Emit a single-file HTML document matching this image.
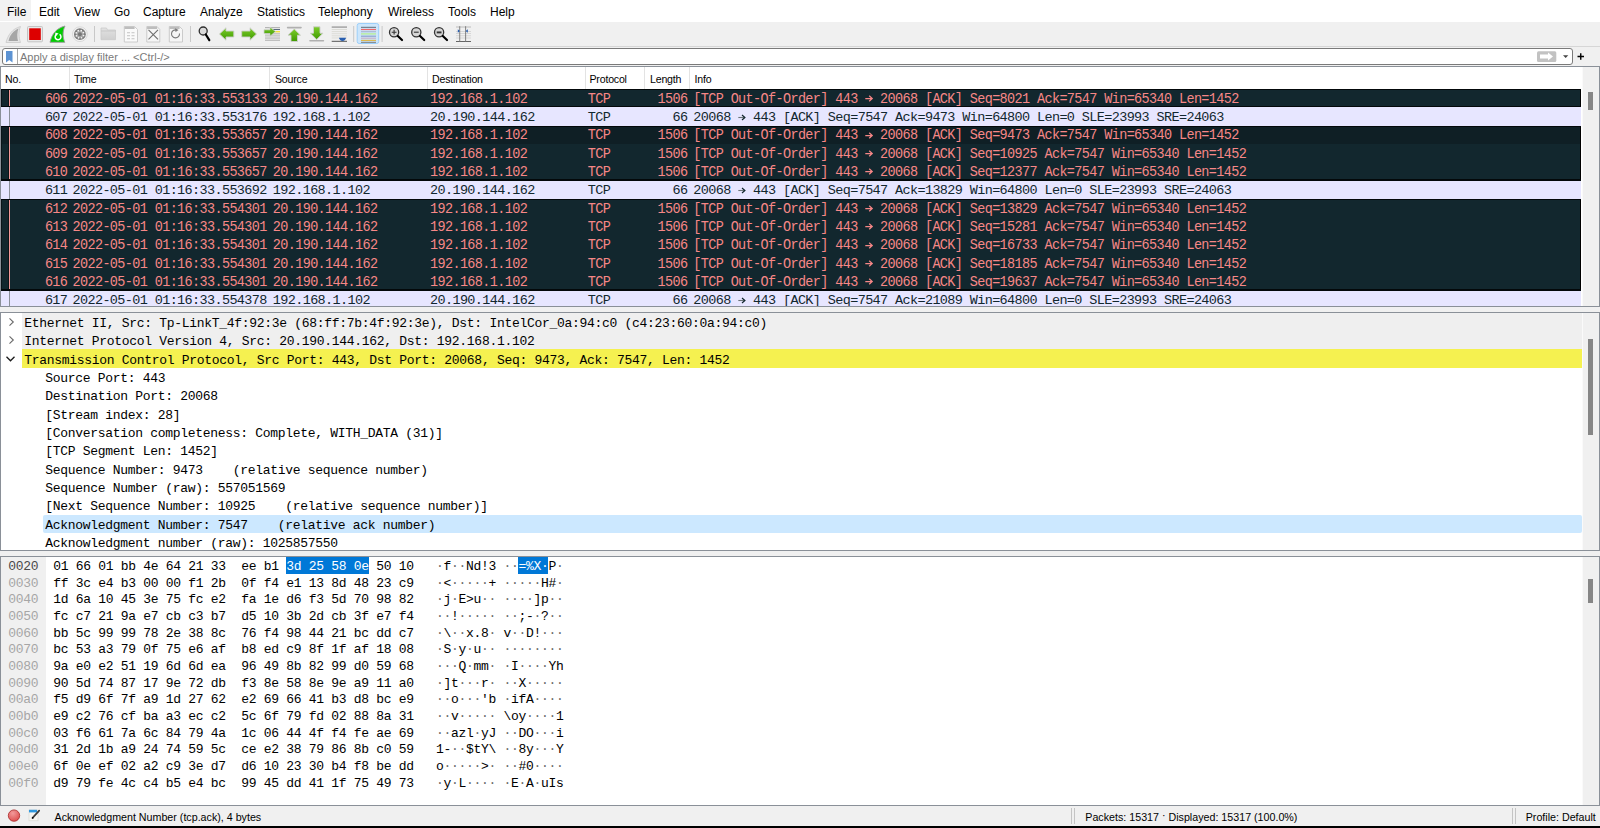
<!DOCTYPE html><html><head><meta charset="utf-8"><style>
*{margin:0;padding:0;box-sizing:border-box}
html,body{width:1600px;height:828px;overflow:hidden;background:#f0f0f0;position:relative;font-family:"Liberation Sans", sans-serif}
.a{position:absolute}
.t{position:absolute;white-space:pre;line-height:normal}
.m{font-family:"Liberation Mono", monospace;font-size:13px;letter-spacing:-0.3px}
.p{font-family:"Liberation Mono", monospace;font-size:13.5px;letter-spacing:-0.63px}
.pd{transform:scaleY(1.1);transform-origin:0 11.25px}
.s{font-family:"Liberation Sans", sans-serif}
.c{position:absolute;overflow:hidden}
</style></head><body><div class="a" style="left:0;top:0;width:1600px;height:22px;background:#fff"></div>
<div class="a" style="left:0;top:0;width:31px;height:20.5px;background:#f2f2f2;border-radius:0 0 2px 0"></div>
<div class="t s" style="left:7px;top:4.6px;font-size:12px;color:#000">File</div>
<div class="t s" style="left:39px;top:4.6px;font-size:12px;color:#000">Edit</div>
<div class="t s" style="left:74px;top:4.6px;font-size:12px;color:#000">View</div>
<div class="t s" style="left:114px;top:4.6px;font-size:12px;color:#000">Go</div>
<div class="t s" style="left:143px;top:4.6px;font-size:12px;color:#000">Capture</div>
<div class="t s" style="left:200px;top:4.6px;font-size:12px;color:#000">Analyze</div>
<div class="t s" style="left:257px;top:4.6px;font-size:12px;color:#000">Statistics</div>
<div class="t s" style="left:318px;top:4.6px;font-size:12px;color:#000">Telephony</div>
<div class="t s" style="left:388px;top:4.6px;font-size:12px;color:#000">Wireless</div>
<div class="t s" style="left:448px;top:4.6px;font-size:12px;color:#000">Tools</div>
<div class="t s" style="left:490px;top:4.6px;font-size:12px;color:#000">Help</div>
<div class="a" style="left:0;top:22px;width:1600px;height:24px;background:#f0f0f0"></div>
<div class="a" style="left:0;top:46px;width:1600px;height:1px;background:#d6d6d6"></div>
<svg class="a" style="left:0;top:0" width="480" height="48" viewBox="0 0 480 48">
<defs>
<linearGradient id="gfold" x1="0" y1="0" x2="0" y2="1"><stop offset="0" stop-color="#e2e2e2"/><stop offset="1" stop-color="#cfcfcf"/></linearGradient>
<linearGradient id="gar" x1="0" y1="0" x2="0" y2="1"><stop offset="0" stop-color="#7ccc2a"/><stop offset="1" stop-color="#3f9a00"/></linearGradient>
</defs>
<!-- 1 grey fin -->
<path d="M6 42.5 C8 35 12 29 20.5 26.5 C18.5 31 18.5 37 20.5 42.5 Z" fill="#e6e6e6" stroke="#d0d0d0" stroke-width="1"/>
<path d="M8.5 41 C10 35 13 31 18.5 28.5 C17 32.5 17 37 18 41 Z" fill="#a6a6a6"/>
<!-- 2 stop -->
<rect x="27.5" y="26.5" width="15" height="15.3" rx="1" fill="#e8e8e8" stroke="#c4c4c4" stroke-width="1"/>
<rect x="29.2" y="28.3" width="11.6" height="11.7" fill="#dd0000"/>
<!-- 3 green fin -->
<path d="M50 42.3 C52 34 56 28.5 65 26 C62.5 31 62.5 37 64.8 42.3 Z" fill="#00cc00" stroke="#9a9a9a" stroke-width="0.9"/>
<path d="M56.2 34.6 A2.9 2.9 0 1 0 59.6 34.4" fill="none" stroke="#ffffff" stroke-width="1.5"/>
<path d="M55.2 32.4 L58.6 33.6 L55.6 36.2 Z" fill="#fff"/>
<!-- 4 gear -->
<circle cx="79.9" cy="34.2" r="7.4" fill="#f3f3f3" stroke="#d6d6d6" stroke-width="0.9"/>
<circle cx="79.9" cy="34.2" r="5.9" fill="#7e7e7e"/>
<circle cx="79.9" cy="34.2" r="3.6" fill="#a9a9a9"/>
<circle cx="83.56" cy="35.53" r="0.85" fill="#f6f6f6"/><circle cx="81.55" cy="37.73" r="0.85" fill="#f6f6f6"/><circle cx="78.57" cy="37.86" r="0.85" fill="#f6f6f6"/><circle cx="76.37" cy="35.85" r="0.85" fill="#f6f6f6"/><circle cx="76.24" cy="32.87" r="0.85" fill="#f6f6f6"/><circle cx="78.25" cy="30.67" r="0.85" fill="#f6f6f6"/><circle cx="81.23" cy="30.54" r="0.85" fill="#f6f6f6"/><circle cx="83.43" cy="32.55" r="0.85" fill="#f6f6f6"/>
<circle cx="79.9" cy="34.2" r="2" fill="#777"/>
<!-- sep -->
<rect x="94" y="26" width="1" height="16" fill="#c8c8c8"/>
<!-- 6 folder -->
<path d="M101 29 L101 28 L106.5 28 L107.5 30 L115.5 30 L115.5 39.7 L101 39.7 Z" fill="url(#gfold)" stroke="#cacaca" stroke-width="0.8"/>
<rect x="101" y="30.6" width="14.5" height="0.8" fill="#c2c2c2"/>
<!-- 7 doc grid -->
<path d="M124.3 26.5 L134.5 26.5 L137.5 29.5 L137.5 42 L124.3 42 Z" fill="#fafafa" stroke="#c6c6c6" stroke-width="0.9"/>
<rect x="124.6" y="26.8" width="10" height="2.2" fill="#bdbdbd"/>
<g fill="#d0d0d0"><rect x="127" y="32" width="3" height="1.3"/><rect x="131.5" y="32" width="3" height="1.3"/><rect x="127" y="35" width="3" height="1.3"/><rect x="131.5" y="35" width="3" height="1.3"/><rect x="127" y="38" width="3" height="1.3"/><rect x="131.5" y="38" width="3" height="1.3"/></g>
<!-- 8 doc X -->
<path d="M146.8 26.5 L157 26.5 L159.8 29.5 L159.8 42 L146.8 42 Z" fill="#f6f6f6" stroke="#c6c6c6" stroke-width="0.9"/>
<rect x="147.1" y="26.8" width="10" height="2.2" fill="#bdbdbd"/>
<path d="M148.5 29.8 L158 39.3 M158 29.8 L148.5 39.3" stroke="#6e6e6e" stroke-width="1.1"/>
<!-- 9 doc reload -->
<path d="M169.3 26.5 L179.5 26.5 L182.5 29.5 L182.5 42 L169.3 42 Z" fill="#f6f6f6" stroke="#c6c6c6" stroke-width="0.9"/>
<rect x="169.6" y="26.8" width="10" height="2.2" fill="#bdbdbd"/>
<path d="M179.5 33.5 A4 4 0 1 1 176.5 30" fill="none" stroke="#7a7a7a" stroke-width="1.1"/>
<path d="M175 28.3 L178.6 30 L175.5 32 Z" fill="#7a7a7a"/>
<!-- sep -->
<rect x="190" y="26" width="1" height="16" fill="#c8c8c8"/>
<!-- 11 find -->
<circle cx="203.2" cy="31" r="4" fill="#dadada" stroke="#2e2e2e" stroke-width="1.3"/>
<path d="M205.8 34.5 L209.3 40.2" stroke="#000" stroke-width="2.2" stroke-linecap="round"/>
<!-- 12 back -->
<path d="M219.5 34 L226 27.8 L226 31 L233.8 31 L233.8 37 L226 37 L226 40.2 Z" fill="url(#gar)" stroke="#cfcfcf" stroke-width="0.9"/>
<!-- 13 forward -->
<path d="M256.5 34 L250 27.8 L250 31 L241.7 31 L241.7 37 L250 37 L250 40.2 Z" fill="url(#gar)" stroke="#cfcfcf" stroke-width="0.9"/>
<!-- 14 goto -->
<g fill="#b4b4b4"><rect x="265" y="27" width="15" height="1.2"/><rect x="265" y="33.3" width="15" height="1.1"/><rect x="265" y="35.4" width="15" height="1"/><rect x="265" y="37.5" width="15" height="1.1"/><rect x="265" y="39.7" width="15" height="1.1"/></g>
<rect x="273" y="29" width="7" height="1" fill="#5a6a80"/>
<rect x="275" y="31" width="5" height="1.4" fill="#f0e040"/>
<path d="M264 29.8 L270 29.8 L270 27 L275.5 31.6 L270 36.2 L270 33.5 L264 33.5 Z" fill="url(#gar)" stroke="#cfcfcf" stroke-width="0.8"/>
<!-- 15 first -->
<rect x="286.8" y="26.8" width="15" height="1.6" rx="0.8" fill="#b0b0b0"/>
<path d="M294.3 29 L300.5 35.2 L297.5 35.2 L297.5 41.5 L291 41.5 L291 35.2 L288 35.2 Z" fill="url(#gar)" stroke="#cfcfcf" stroke-width="0.9"/>
<!-- 16 last -->
<path d="M316.7 39.5 L323 33.2 L320 33.2 L320 26.8 L313.5 26.8 L313.5 33.2 L310.4 33.2 Z" fill="url(#gar)" stroke="#cfcfcf" stroke-width="0.9"/>
<rect x="309.2" y="40" width="15" height="1.6" rx="0.8" fill="#b0b0b0"/>
<!-- 17 autoscroll -->
<rect x="331.7" y="26.3" width="15.3" height="1.6" fill="#a8a8a8"/>
<g fill="#dadad4"><rect x="331.7" y="29.1" width="15.3" height="0.9"/><rect x="331.7" y="31.2" width="15.3" height="0.9"/><rect x="331.7" y="33.3" width="15.3" height="0.9"/><rect x="331.7" y="35.4" width="15.3" height="0.9"/><rect x="331.7" y="37.5" width="15.3" height="0.9"/></g>
<rect x="331.7" y="40.8" width="15.3" height="1" fill="#555"/>
<path d="M339 37.8 L346 37.8 Q345.5 40.8 342.5 41 Q339.5 40.8 339 37.8 Z" fill="#2a5fb0"/>
<!-- sep -->
<rect x="353.2" y="26" width="1" height="16" fill="#c8c8c8"/>
<!-- 19 colorize pressed -->
<rect x="357.2" y="23.5" width="21.5" height="20" rx="2" fill="#cde6fb" stroke="#9ccffa" stroke-width="1"/>
<g>
<rect x="361" y="26.8" width="15" height="1.1" fill="#6b7b88"/>
<rect x="361" y="28.9" width="15" height="1.2" fill="#f06868"/>
<rect x="361" y="31.1" width="15" height="1.2" fill="#a8b8d4"/>
<rect x="361" y="33.2" width="15" height="1.4" fill="#b8ee98"/>
<rect x="361" y="35.6" width="15" height="1.2" fill="#90a4cc"/>
<rect x="361" y="37.6" width="15" height="1.2" fill="#c8b4c8"/>
<rect x="361" y="39.8" width="15" height="1.2" fill="#dcb850"/>
<rect x="361" y="41.8" width="15" height="1" fill="#7a7a7a"/>
</g>
<!-- sep -->
<rect x="381.6" y="26" width="1" height="16" fill="#c8c8c8"/>
<!-- 21 zoom in -->
<circle cx="394.1" cy="32.2" r="4.6" fill="#d6d6d6" stroke="#333" stroke-width="1.3"/>
<path d="M391.7 32.2 L396.5 32.2 M394.1 29.8 L394.1 34.6" stroke="#333" stroke-width="1.1"/>
<path d="M397.8 36 L402 40" stroke="#000" stroke-width="2.2" stroke-linecap="round"/>
<!-- 22 zoom out -->
<circle cx="416.3" cy="32.2" r="4.6" fill="#d6d6d6" stroke="#333" stroke-width="1.3"/>
<path d="M413.9 32.2 L418.7 32.2" stroke="#333" stroke-width="1.1"/>
<path d="M420 36 L424.2 40" stroke="#000" stroke-width="2.2" stroke-linecap="round"/>
<!-- 23 zoom 100 -->
<circle cx="439.1" cy="32.2" r="4.6" fill="#d6d6d6" stroke="#333" stroke-width="1.3"/>
<path d="M436.7 32.4 L441.5 32.4" stroke="#333" stroke-width="1.9"/>
<path d="M442.8 36 L447 40" stroke="#000" stroke-width="2.2" stroke-linecap="round"/>
<!-- 24 resize columns -->
<g fill="#d0d0d0"><rect x="456" y="26.2" width="15" height="1.6"/><rect x="456" y="31" width="15" height="0.8"/><rect x="456" y="33.2" width="15" height="0.8"/><rect x="456" y="35.4" width="15" height="0.8"/><rect x="456" y="37.6" width="15" height="0.8"/></g>
<rect x="456" y="41" width="15" height="0.9" fill="#555"/>
<rect x="459.3" y="26.2" width="0.9" height="15.6" fill="#777"/>
<rect x="465.2" y="26.2" width="0.9" height="15.6" fill="#777"/>
<path d="M457.8 29.2 L460 31 L457.8 32.8 Z" fill="#2a5fb0"/>
<path d="M467.8 29.2 L465.6 31 L467.8 32.8 Z" fill="#2a5fb0"/>
</svg>
<div class="a" style="left:2px;top:48px;width:1571px;height:17px;background:#fff;border:1px solid #7a7a7a;border-radius:3px"></div>
<svg class="a" style="left:5px;top:50px" width="9" height="14" viewBox="0 0 9 14"><path d="M1 1 L7.5 1 L7.5 12.5 L4.25 10 L1 12.5 Z" fill="#5d93d3"/></svg>
<div class="a" style="left:17px;top:49px;width:1px;height:15px;background:#a8a8a8"></div>
<div class="t s" style="left:20px;top:50.5px;font-size:11px;color:#7a7a7a">Apply a display filter ... &lt;Ctrl-/&gt;</div>
<svg class="a" style="left:1536px;top:50px" width="50" height="14" viewBox="0 0 50 14"><rect x="1" y="1.2" width="19.3" height="10.8" rx="1.5" fill="#c2c2c2"/><path d="M4 4.6 L12 4.6 L12 2.6 L17 6.6 L12 10.6 L12 8.6 L4 8.6 Z" fill="#fff"/><path d="M27 5.3 L32.3 5.3 L29.65 8 Z" fill="#444"/><path d="M44.75 3.3 L44.75 9.8 M41.5 6.5 L48 6.5" stroke="#000" stroke-width="1.4"/></svg>
<div class="a" style="left:0;top:66px;width:1600px;height:241px;background:#fff;border:1px solid #8a9098"></div>
<div class="a" style="left:69px;top:67px;width:1px;height:22px;background:#e3e3e3"></div>
<div class="a" style="left:269px;top:67px;width:1px;height:22px;background:#e3e3e3"></div>
<div class="a" style="left:427px;top:67px;width:1px;height:22px;background:#e3e3e3"></div>
<div class="a" style="left:585px;top:67px;width:1px;height:22px;background:#e3e3e3"></div>
<div class="a" style="left:644px;top:67px;width:1px;height:22px;background:#e3e3e3"></div>
<div class="a" style="left:689px;top:67px;width:1px;height:22px;background:#e3e3e3"></div>
<div class="t s" style="left:5px;top:73px;font-size:10.6px;letter-spacing:-0.2px;color:#000">No.</div>
<div class="t s" style="left:74px;top:73px;font-size:10.6px;letter-spacing:-0.2px;color:#000">Time</div>
<div class="t s" style="left:275px;top:73px;font-size:10.6px;letter-spacing:-0.2px;color:#000">Source</div>
<div class="t s" style="left:432px;top:73px;font-size:10.6px;letter-spacing:-0.2px;color:#000">Destination</div>
<div class="t s" style="left:589.5px;top:73px;font-size:10.6px;letter-spacing:-0.2px;color:#000">Protocol</div>
<div class="t s" style="left:650px;top:73px;font-size:10.6px;letter-spacing:-0.2px;color:#000">Length</div>
<div class="t s" style="left:694.5px;top:73px;font-size:10.6px;letter-spacing:-0.2px;color:#000">Info</div>
<div class="c" style="left:1px;top:67px;width:1581px;height:239px">
<div class="a" style="left:0;top:22.10px;width:1580px;height:18.93px;background:#12272e"></div>
<div class="a" style="left:0;top:40.43px;width:1580px;height:18.93px;background:#e7e6ff"></div>
<div class="a" style="left:0;top:58.77px;width:1580px;height:18.93px;background:#0f1f25"></div>
<div class="a" style="left:0;top:77.10px;width:1580px;height:18.93px;background:#12272e"></div>
<div class="a" style="left:0;top:95.43px;width:1580px;height:18.93px;background:#12272e"></div>
<div class="a" style="left:0;top:113.76px;width:1580px;height:18.93px;background:#e7e6ff"></div>
<div class="a" style="left:0;top:132.10px;width:1580px;height:18.93px;background:#12272e"></div>
<div class="a" style="left:0;top:150.43px;width:1580px;height:18.93px;background:#12272e"></div>
<div class="a" style="left:0;top:168.76px;width:1580px;height:18.93px;background:#12272e"></div>
<div class="a" style="left:0;top:187.10px;width:1580px;height:18.93px;background:#12272e"></div>
<div class="a" style="left:0;top:205.43px;width:1580px;height:18.93px;background:#12272e"></div>
<div class="a" style="left:0;top:223.76px;width:1580px;height:18.93px;background:#e7e6ff"></div>
<div class="a" style="left:7px;top:22.10px;width:1px;height:18.33px;background:#0a1418"></div>
<div class="a" style="left:1579px;top:22.10px;width:1px;height:18.33px;background:#000"></div>
<div class="a" style="left:0;top:22.10px;width:1px;height:18.33px;background:#0a1418"></div>
<div class="a" style="left:8px;top:22.10px;width:1.2px;height:18.83px;background:#f49a9a"></div>
<svg class="a" style="left:864.41px;top:27.90px" width="9" height="7" viewBox="0 0 9 7"><path d="M0.3 3.5 L7 3.5 M4.2 0.8 L7.2 3.5 L4.2 6.2" fill="none" stroke="#f78787" stroke-width="1.25"/></svg>
<div class="t p pd" style="left:43.89px;top:24.60px;color:#f78787">606</div>
<div class="t p pd" style="left:71.50px;top:24.60px;color:#f78787">2022-05-01 01:16:33.553133</div>
<div class="t p pd" style="left:271.80px;top:24.60px;color:#f78787">20.190.144.162</div>
<div class="t p pd" style="left:429.00px;top:24.60px;color:#f78787">192.168.1.102</div>
<div class="t p pd" style="left:586.70px;top:24.60px;color:#f78787">TCP</div>
<div class="t p pd" style="left:656.52px;top:24.60px;color:#f78787">1506</div>
<div class="t p pd" style="left:692.30px;top:24.60px;color:#f78787">[TCP Out-Of-Order] 443   20068 [ACK] Seq=8021 Ack=7547 Win=65340 Len=1452</div>
<div class="a" style="left:8px;top:40.43px;width:1.2px;height:18.83px;background:#8a9098"></div>
<svg class="a" style="left:736.72px;top:46.93px" width="9" height="7" viewBox="0 0 9 7"><path d="M0.3 3.5 L6.5 3.5" stroke="#6a7478" stroke-width="1.1"/><path d="M4 1 L6.9 3.5 L4 6" fill="none" stroke="#12272e" stroke-width="1.2"/></svg>
<div class="t p" style="left:43.89px;top:42.93px;color:#12272e">607</div>
<div class="t p" style="left:71.50px;top:42.93px;color:#12272e">2022-05-01 01:16:33.553176</div>
<div class="t p" style="left:271.80px;top:42.93px;color:#12272e">192.168.1.102</div>
<div class="t p" style="left:429.00px;top:42.93px;color:#12272e">20.190.144.162</div>
<div class="t p" style="left:586.70px;top:42.93px;color:#12272e">TCP</div>
<div class="t p" style="left:671.46px;top:42.93px;color:#12272e">66</div>
<div class="t p" style="left:692.30px;top:42.93px;color:#12272e">20068   443 [ACK] Seq=7547 Ack=9473 Win=64800 Len=0 SLE=23993 SRE=24063</div>
<div class="a" style="left:7px;top:58.77px;width:1px;height:18.33px;background:#0a1418"></div>
<div class="a" style="left:1579px;top:58.77px;width:1px;height:18.33px;background:#000"></div>
<div class="a" style="left:0;top:58.77px;width:1px;height:18.33px;background:#0a1418"></div>
<div class="a" style="left:8px;top:58.77px;width:1.2px;height:18.83px;background:#f49a9a"></div>
<svg class="a" style="left:864.41px;top:64.57px" width="9" height="7" viewBox="0 0 9 7"><path d="M0.3 3.5 L7 3.5 M4.2 0.8 L7.2 3.5 L4.2 6.2" fill="none" stroke="#f78787" stroke-width="1.25"/></svg>
<div class="t p pd" style="left:43.89px;top:61.27px;color:#f78787">608</div>
<div class="t p pd" style="left:71.50px;top:61.27px;color:#f78787">2022-05-01 01:16:33.553657</div>
<div class="t p pd" style="left:271.80px;top:61.27px;color:#f78787">20.190.144.162</div>
<div class="t p pd" style="left:429.00px;top:61.27px;color:#f78787">192.168.1.102</div>
<div class="t p pd" style="left:586.70px;top:61.27px;color:#f78787">TCP</div>
<div class="t p pd" style="left:656.52px;top:61.27px;color:#f78787">1506</div>
<div class="t p pd" style="left:692.30px;top:61.27px;color:#f78787">[TCP Out-Of-Order] 443   20068 [ACK] Seq=9473 Ack=7547 Win=65340 Len=1452</div>
<div class="a" style="left:7px;top:77.10px;width:1px;height:18.33px;background:#0a1418"></div>
<div class="a" style="left:1579px;top:77.10px;width:1px;height:18.33px;background:#000"></div>
<div class="a" style="left:0;top:77.10px;width:1px;height:18.33px;background:#0a1418"></div>
<div class="a" style="left:8px;top:77.10px;width:1.2px;height:18.83px;background:#f49a9a"></div>
<svg class="a" style="left:864.41px;top:82.90px" width="9" height="7" viewBox="0 0 9 7"><path d="M0.3 3.5 L7 3.5 M4.2 0.8 L7.2 3.5 L4.2 6.2" fill="none" stroke="#f78787" stroke-width="1.25"/></svg>
<div class="t p pd" style="left:43.89px;top:79.60px;color:#f78787">609</div>
<div class="t p pd" style="left:71.50px;top:79.60px;color:#f78787">2022-05-01 01:16:33.553657</div>
<div class="t p pd" style="left:271.80px;top:79.60px;color:#f78787">20.190.144.162</div>
<div class="t p pd" style="left:429.00px;top:79.60px;color:#f78787">192.168.1.102</div>
<div class="t p pd" style="left:586.70px;top:79.60px;color:#f78787">TCP</div>
<div class="t p pd" style="left:656.52px;top:79.60px;color:#f78787">1506</div>
<div class="t p pd" style="left:692.30px;top:79.60px;color:#f78787">[TCP Out-Of-Order] 443   20068 [ACK] Seq=10925 Ack=7547 Win=65340 Len=1452</div>
<div class="a" style="left:7px;top:95.43px;width:1px;height:18.33px;background:#0a1418"></div>
<div class="a" style="left:1579px;top:95.43px;width:1px;height:18.33px;background:#000"></div>
<div class="a" style="left:0;top:95.43px;width:1px;height:18.33px;background:#0a1418"></div>
<div class="a" style="left:8px;top:95.43px;width:1.2px;height:18.83px;background:#f49a9a"></div>
<svg class="a" style="left:864.41px;top:101.23px" width="9" height="7" viewBox="0 0 9 7"><path d="M0.3 3.5 L7 3.5 M4.2 0.8 L7.2 3.5 L4.2 6.2" fill="none" stroke="#f78787" stroke-width="1.25"/></svg>
<div class="t p pd" style="left:43.89px;top:97.93px;color:#f78787">610</div>
<div class="t p pd" style="left:71.50px;top:97.93px;color:#f78787">2022-05-01 01:16:33.553657</div>
<div class="t p pd" style="left:271.80px;top:97.93px;color:#f78787">20.190.144.162</div>
<div class="t p pd" style="left:429.00px;top:97.93px;color:#f78787">192.168.1.102</div>
<div class="t p pd" style="left:586.70px;top:97.93px;color:#f78787">TCP</div>
<div class="t p pd" style="left:656.52px;top:97.93px;color:#f78787">1506</div>
<div class="t p pd" style="left:692.30px;top:97.93px;color:#f78787">[TCP Out-Of-Order] 443   20068 [ACK] Seq=12377 Ack=7547 Win=65340 Len=1452</div>
<div class="a" style="left:8px;top:113.76px;width:1.2px;height:18.83px;background:#8a9098"></div>
<svg class="a" style="left:736.72px;top:120.26px" width="9" height="7" viewBox="0 0 9 7"><path d="M0.3 3.5 L6.5 3.5" stroke="#6a7478" stroke-width="1.1"/><path d="M4 1 L6.9 3.5 L4 6" fill="none" stroke="#12272e" stroke-width="1.2"/></svg>
<div class="t p" style="left:43.89px;top:116.26px;color:#12272e">611</div>
<div class="t p" style="left:71.50px;top:116.26px;color:#12272e">2022-05-01 01:16:33.553692</div>
<div class="t p" style="left:271.80px;top:116.26px;color:#12272e">192.168.1.102</div>
<div class="t p" style="left:429.00px;top:116.26px;color:#12272e">20.190.144.162</div>
<div class="t p" style="left:586.70px;top:116.26px;color:#12272e">TCP</div>
<div class="t p" style="left:671.46px;top:116.26px;color:#12272e">66</div>
<div class="t p" style="left:692.30px;top:116.26px;color:#12272e">20068   443 [ACK] Seq=7547 Ack=13829 Win=64800 Len=0 SLE=23993 SRE=24063</div>
<div class="a" style="left:7px;top:132.10px;width:1px;height:18.33px;background:#0a1418"></div>
<div class="a" style="left:1579px;top:132.10px;width:1px;height:18.33px;background:#000"></div>
<div class="a" style="left:0;top:132.10px;width:1px;height:18.33px;background:#0a1418"></div>
<div class="a" style="left:8px;top:132.10px;width:1.2px;height:18.83px;background:#f49a9a"></div>
<svg class="a" style="left:864.41px;top:137.90px" width="9" height="7" viewBox="0 0 9 7"><path d="M0.3 3.5 L7 3.5 M4.2 0.8 L7.2 3.5 L4.2 6.2" fill="none" stroke="#f78787" stroke-width="1.25"/></svg>
<div class="t p pd" style="left:43.89px;top:134.60px;color:#f78787">612</div>
<div class="t p pd" style="left:71.50px;top:134.60px;color:#f78787">2022-05-01 01:16:33.554301</div>
<div class="t p pd" style="left:271.80px;top:134.60px;color:#f78787">20.190.144.162</div>
<div class="t p pd" style="left:429.00px;top:134.60px;color:#f78787">192.168.1.102</div>
<div class="t p pd" style="left:586.70px;top:134.60px;color:#f78787">TCP</div>
<div class="t p pd" style="left:656.52px;top:134.60px;color:#f78787">1506</div>
<div class="t p pd" style="left:692.30px;top:134.60px;color:#f78787">[TCP Out-Of-Order] 443   20068 [ACK] Seq=13829 Ack=7547 Win=65340 Len=1452</div>
<div class="a" style="left:7px;top:150.43px;width:1px;height:18.33px;background:#0a1418"></div>
<div class="a" style="left:1579px;top:150.43px;width:1px;height:18.33px;background:#000"></div>
<div class="a" style="left:0;top:150.43px;width:1px;height:18.33px;background:#0a1418"></div>
<div class="a" style="left:8px;top:150.43px;width:1.2px;height:18.83px;background:#f49a9a"></div>
<svg class="a" style="left:864.41px;top:156.23px" width="9" height="7" viewBox="0 0 9 7"><path d="M0.3 3.5 L7 3.5 M4.2 0.8 L7.2 3.5 L4.2 6.2" fill="none" stroke="#f78787" stroke-width="1.25"/></svg>
<div class="t p pd" style="left:43.89px;top:152.93px;color:#f78787">613</div>
<div class="t p pd" style="left:71.50px;top:152.93px;color:#f78787">2022-05-01 01:16:33.554301</div>
<div class="t p pd" style="left:271.80px;top:152.93px;color:#f78787">20.190.144.162</div>
<div class="t p pd" style="left:429.00px;top:152.93px;color:#f78787">192.168.1.102</div>
<div class="t p pd" style="left:586.70px;top:152.93px;color:#f78787">TCP</div>
<div class="t p pd" style="left:656.52px;top:152.93px;color:#f78787">1506</div>
<div class="t p pd" style="left:692.30px;top:152.93px;color:#f78787">[TCP Out-Of-Order] 443   20068 [ACK] Seq=15281 Ack=7547 Win=65340 Len=1452</div>
<div class="a" style="left:7px;top:168.76px;width:1px;height:18.33px;background:#0a1418"></div>
<div class="a" style="left:1579px;top:168.76px;width:1px;height:18.33px;background:#000"></div>
<div class="a" style="left:0;top:168.76px;width:1px;height:18.33px;background:#0a1418"></div>
<div class="a" style="left:8px;top:168.76px;width:1.2px;height:18.83px;background:#f49a9a"></div>
<svg class="a" style="left:864.41px;top:174.56px" width="9" height="7" viewBox="0 0 9 7"><path d="M0.3 3.5 L7 3.5 M4.2 0.8 L7.2 3.5 L4.2 6.2" fill="none" stroke="#f78787" stroke-width="1.25"/></svg>
<div class="t p pd" style="left:43.89px;top:171.26px;color:#f78787">614</div>
<div class="t p pd" style="left:71.50px;top:171.26px;color:#f78787">2022-05-01 01:16:33.554301</div>
<div class="t p pd" style="left:271.80px;top:171.26px;color:#f78787">20.190.144.162</div>
<div class="t p pd" style="left:429.00px;top:171.26px;color:#f78787">192.168.1.102</div>
<div class="t p pd" style="left:586.70px;top:171.26px;color:#f78787">TCP</div>
<div class="t p pd" style="left:656.52px;top:171.26px;color:#f78787">1506</div>
<div class="t p pd" style="left:692.30px;top:171.26px;color:#f78787">[TCP Out-Of-Order] 443   20068 [ACK] Seq=16733 Ack=7547 Win=65340 Len=1452</div>
<div class="a" style="left:7px;top:187.10px;width:1px;height:18.33px;background:#0a1418"></div>
<div class="a" style="left:1579px;top:187.10px;width:1px;height:18.33px;background:#000"></div>
<div class="a" style="left:0;top:187.10px;width:1px;height:18.33px;background:#0a1418"></div>
<div class="a" style="left:8px;top:187.10px;width:1.2px;height:18.83px;background:#f49a9a"></div>
<svg class="a" style="left:864.41px;top:192.90px" width="9" height="7" viewBox="0 0 9 7"><path d="M0.3 3.5 L7 3.5 M4.2 0.8 L7.2 3.5 L4.2 6.2" fill="none" stroke="#f78787" stroke-width="1.25"/></svg>
<div class="t p pd" style="left:43.89px;top:189.60px;color:#f78787">615</div>
<div class="t p pd" style="left:71.50px;top:189.60px;color:#f78787">2022-05-01 01:16:33.554301</div>
<div class="t p pd" style="left:271.80px;top:189.60px;color:#f78787">20.190.144.162</div>
<div class="t p pd" style="left:429.00px;top:189.60px;color:#f78787">192.168.1.102</div>
<div class="t p pd" style="left:586.70px;top:189.60px;color:#f78787">TCP</div>
<div class="t p pd" style="left:656.52px;top:189.60px;color:#f78787">1506</div>
<div class="t p pd" style="left:692.30px;top:189.60px;color:#f78787">[TCP Out-Of-Order] 443   20068 [ACK] Seq=18185 Ack=7547 Win=65340 Len=1452</div>
<div class="a" style="left:7px;top:205.43px;width:1px;height:18.33px;background:#0a1418"></div>
<div class="a" style="left:1579px;top:205.43px;width:1px;height:18.33px;background:#000"></div>
<div class="a" style="left:0;top:205.43px;width:1px;height:18.33px;background:#0a1418"></div>
<div class="a" style="left:8px;top:205.43px;width:1.2px;height:18.83px;background:#f49a9a"></div>
<svg class="a" style="left:864.41px;top:211.23px" width="9" height="7" viewBox="0 0 9 7"><path d="M0.3 3.5 L7 3.5 M4.2 0.8 L7.2 3.5 L4.2 6.2" fill="none" stroke="#f78787" stroke-width="1.25"/></svg>
<div class="t p pd" style="left:43.89px;top:207.93px;color:#f78787">616</div>
<div class="t p pd" style="left:71.50px;top:207.93px;color:#f78787">2022-05-01 01:16:33.554301</div>
<div class="t p pd" style="left:271.80px;top:207.93px;color:#f78787">20.190.144.162</div>
<div class="t p pd" style="left:429.00px;top:207.93px;color:#f78787">192.168.1.102</div>
<div class="t p pd" style="left:586.70px;top:207.93px;color:#f78787">TCP</div>
<div class="t p pd" style="left:656.52px;top:207.93px;color:#f78787">1506</div>
<div class="t p pd" style="left:692.30px;top:207.93px;color:#f78787">[TCP Out-Of-Order] 443   20068 [ACK] Seq=19637 Ack=7547 Win=65340 Len=1452</div>
<div class="a" style="left:8px;top:223.76px;width:1.2px;height:18.83px;background:#8a9098"></div>
<svg class="a" style="left:736.72px;top:230.26px" width="9" height="7" viewBox="0 0 9 7"><path d="M0.3 3.5 L6.5 3.5" stroke="#6a7478" stroke-width="1.1"/><path d="M4 1 L6.9 3.5 L4 6" fill="none" stroke="#12272e" stroke-width="1.2"/></svg>
<div class="t p" style="left:43.89px;top:226.26px;color:#12272e">617</div>
<div class="t p" style="left:71.50px;top:226.26px;color:#12272e">2022-05-01 01:16:33.554378</div>
<div class="t p" style="left:271.80px;top:226.26px;color:#12272e">192.168.1.102</div>
<div class="t p" style="left:429.00px;top:226.26px;color:#12272e">20.190.144.162</div>
<div class="t p" style="left:586.70px;top:226.26px;color:#12272e">TCP</div>
<div class="t p" style="left:671.46px;top:226.26px;color:#12272e">66</div>
<div class="t p" style="left:692.30px;top:226.26px;color:#12272e">20068   443 [ACK] Seq=7547 Ack=21089 Win=64800 Len=0 SLE=23993 SRE=24063</div>
<div class="a" style="left:0;top:22.10px;width:1580px;height:1.3px;background:#03080a"></div>
<div class="a" style="left:0;top:39.13px;width:1580px;height:1.3px;background:#03080a"></div>
<div class="a" style="left:0;top:58.77px;width:1580px;height:1.3px;background:#03080a"></div>
<div class="a" style="left:0;top:112.46px;width:1580px;height:1.3px;background:#03080a"></div>
<div class="a" style="left:0;top:132.10px;width:1580px;height:1.3px;background:#03080a"></div>
<div class="a" style="left:0;top:222.46px;width:1580px;height:1.3px;background:#03080a"></div>
</div>
<div class="a" style="left:1582px;top:67px;width:17px;height:239px;background:#f0f0f0;border-left:1px solid #fafafa"></div>
<div class="a" style="left:1588px;top:91.5px;width:5px;height:18.5px;background:#868686"></div>
<div class="a" style="left:0;top:312px;width:1600px;height:239px;background:#fff;border:1px solid #8a9098"></div>
<div class="a" style="left:22px;top:312.80px;width:1560px;height:36.67px;background:#efefef"></div>
<div class="a" style="left:22px;top:349.47px;width:1560px;height:18.33px;background:#f5f150"></div>
<div class="a" style="left:43px;top:514.66px;width:1539px;height:17.93px;background:#cce8ff;border-radius:2px"></div>
<div class="t m" style="left:24.30px;top:316.10px;color:#000">Ethernet II, Src: Tp-LinkT_4f:92:3e (68:ff:7b:4f:92:3e), Dst: IntelCor_0a:94:c0 (c4:23:60:0a:94:c0)</div>
<svg class="a" style="left:7px;top:316.80px" width="9" height="10" viewBox="0 0 9 10"><path d="M2.5 1.3 L6.3 5 L2.5 8.7" fill="none" stroke="#6a6a6a" stroke-width="1.1"/></svg>
<div class="t m" style="left:24.30px;top:334.43px;color:#000">Internet Protocol Version 4, Src: 20.190.144.162, Dst: 192.168.1.102</div>
<svg class="a" style="left:7px;top:335.13px" width="9" height="10" viewBox="0 0 9 10"><path d="M2.5 1.3 L6.3 5 L2.5 8.7" fill="none" stroke="#6a6a6a" stroke-width="1.1"/></svg>
<div class="t m" style="left:24.30px;top:352.77px;color:#000">Transmission Control Protocol, Src Port: 443, Dst Port: 20068, Seq: 9473, Ack: 7547, Len: 1452</div>
<svg class="a" style="left:5px;top:354.97px" width="11" height="8" viewBox="0 0 11 8"><path d="M1.5 1.8 L5.5 5.8 L9.5 1.8" fill="none" stroke="#1a1a1a" stroke-width="1.3"/></svg>
<div class="t m" style="left:45.30px;top:371.10px;color:#000">Source Port: 443</div>
<div class="t m" style="left:45.30px;top:389.43px;color:#000">Destination Port: 20068</div>
<div class="t m" style="left:45.30px;top:407.77px;color:#000">[Stream index: 28]</div>
<div class="t m" style="left:45.30px;top:426.10px;color:#000">[Conversation completeness: Complete, WITH_DATA (31)]</div>
<div class="t m" style="left:45.30px;top:444.43px;color:#000">[TCP Segment Len: 1452]</div>
<div class="t m" style="left:45.30px;top:462.76px;color:#000">Sequence Number: 9473    (relative sequence number)</div>
<div class="t m" style="left:45.30px;top:481.10px;color:#000">Sequence Number (raw): 557051569</div>
<div class="t m" style="left:45.30px;top:499.43px;color:#000">[Next Sequence Number: 10925    (relative sequence number)]</div>
<div class="t m" style="left:45.30px;top:517.76px;color:#000">Acknowledgment Number: 7547    (relative ack number)</div>
<div class="t m" style="left:45.30px;top:536.10px;color:#000">Acknowledgment number (raw): 1025857550</div>
<div class="a" style="left:1582px;top:313px;width:17px;height:237px;background:#f0f0f0;border-left:1px solid #fafafa"></div>
<div class="a" style="left:1588px;top:339px;width:5px;height:96px;background:#868686"></div>
<div class="a" style="left:0;top:556px;width:1600px;height:250px;background:#fff;border:1px solid #8a9098"></div>
<div class="a" style="left:1px;top:557px;width:45px;height:248px;background:#f0f0f0"></div>
<div class="a" style="left:286px;top:557.00px;width:82.5px;height:16.5px;background:#0078d7"></div>
<div class="a" style="left:518px;top:557.00px;width:30px;height:16.5px;background:#0078d7"></div>
<div class="t m" style="left:8.3px;top:559.20px;color:#4a4a4a">0020</div>
<div class="t m" style="left:53.3px;top:559.20px;color:#000">01 66 01 bb 4e 64 21 33</div>
<div class="t m" style="left:241.3px;top:559.20px;color:#000">ee b1 <span style="color:#fff">3d 25 58 0e</span> 50 10</div>
<div class="t m" style="left:436px;top:559.20px;color:#000"><span style="color:#6a6a6a">·</span>f<span style="color:#6a6a6a">·</span><span style="color:#6a6a6a">·</span>Nd!3</div>
<div class="t m" style="left:503.5px;top:559.20px;color:#000"><span style="color:#6a6a6a">·</span><span style="color:#6a6a6a">·</span><span style="color:#fff">=%X·</span>P<span style="color:#6a6a6a">·</span></div>
<div class="t m" style="left:8.3px;top:575.84px;color:#a6a6a6">0030</div>
<div class="t m" style="left:53.3px;top:575.84px;color:#000">ff 3c e4 b3 00 00 f1 2b</div>
<div class="t m" style="left:241.3px;top:575.84px;color:#000">0f f4 e1 13 8d 48 23 c9</div>
<div class="t m" style="left:436px;top:575.84px;color:#000"><span style="color:#6a6a6a">·</span>&lt;<span style="color:#6a6a6a">·</span><span style="color:#6a6a6a">·</span><span style="color:#6a6a6a">·</span><span style="color:#6a6a6a">·</span><span style="color:#6a6a6a">·</span>+</div>
<div class="t m" style="left:503.5px;top:575.84px;color:#000"><span style="color:#6a6a6a">·</span><span style="color:#6a6a6a">·</span><span style="color:#6a6a6a">·</span><span style="color:#6a6a6a">·</span><span style="color:#6a6a6a">·</span>H#<span style="color:#6a6a6a">·</span></div>
<div class="t m" style="left:8.3px;top:592.48px;color:#a6a6a6">0040</div>
<div class="t m" style="left:53.3px;top:592.48px;color:#000">1d 6a 10 45 3e 75 fc e2</div>
<div class="t m" style="left:241.3px;top:592.48px;color:#000">fa 1e d6 f3 5d 70 98 82</div>
<div class="t m" style="left:436px;top:592.48px;color:#000"><span style="color:#6a6a6a">·</span>j<span style="color:#6a6a6a">·</span>E&gt;u<span style="color:#6a6a6a">·</span><span style="color:#6a6a6a">·</span></div>
<div class="t m" style="left:503.5px;top:592.48px;color:#000"><span style="color:#6a6a6a">·</span><span style="color:#6a6a6a">·</span><span style="color:#6a6a6a">·</span><span style="color:#6a6a6a">·</span>]p<span style="color:#6a6a6a">·</span><span style="color:#6a6a6a">·</span></div>
<div class="t m" style="left:8.3px;top:609.12px;color:#a6a6a6">0050</div>
<div class="t m" style="left:53.3px;top:609.12px;color:#000">fc c7 21 9a e7 cb c3 b7</div>
<div class="t m" style="left:241.3px;top:609.12px;color:#000">d5 10 3b 2d cb 3f e7 f4</div>
<div class="t m" style="left:436px;top:609.12px;color:#000"><span style="color:#6a6a6a">·</span><span style="color:#6a6a6a">·</span>!<span style="color:#6a6a6a">·</span><span style="color:#6a6a6a">·</span><span style="color:#6a6a6a">·</span><span style="color:#6a6a6a">·</span><span style="color:#6a6a6a">·</span></div>
<div class="t m" style="left:503.5px;top:609.12px;color:#000"><span style="color:#6a6a6a">·</span><span style="color:#6a6a6a">·</span>;-<span style="color:#6a6a6a">·</span>?<span style="color:#6a6a6a">·</span><span style="color:#6a6a6a">·</span></div>
<div class="t m" style="left:8.3px;top:625.76px;color:#a6a6a6">0060</div>
<div class="t m" style="left:53.3px;top:625.76px;color:#000">bb 5c 99 99 78 2e 38 8c</div>
<div class="t m" style="left:241.3px;top:625.76px;color:#000">76 f4 98 44 21 bc dd c7</div>
<div class="t m" style="left:436px;top:625.76px;color:#000"><span style="color:#6a6a6a">·</span>\<span style="color:#6a6a6a">·</span><span style="color:#6a6a6a">·</span>x.8<span style="color:#6a6a6a">·</span></div>
<div class="t m" style="left:503.5px;top:625.76px;color:#000">v<span style="color:#6a6a6a">·</span><span style="color:#6a6a6a">·</span>D!<span style="color:#6a6a6a">·</span><span style="color:#6a6a6a">·</span><span style="color:#6a6a6a">·</span></div>
<div class="t m" style="left:8.3px;top:642.40px;color:#a6a6a6">0070</div>
<div class="t m" style="left:53.3px;top:642.40px;color:#000">bc 53 a3 79 0f 75 e6 af</div>
<div class="t m" style="left:241.3px;top:642.40px;color:#000">b8 ed c9 8f 1f af 18 08</div>
<div class="t m" style="left:436px;top:642.40px;color:#000"><span style="color:#6a6a6a">·</span>S<span style="color:#6a6a6a">·</span>y<span style="color:#6a6a6a">·</span>u<span style="color:#6a6a6a">·</span><span style="color:#6a6a6a">·</span></div>
<div class="t m" style="left:503.5px;top:642.40px;color:#000"><span style="color:#6a6a6a">·</span><span style="color:#6a6a6a">·</span><span style="color:#6a6a6a">·</span><span style="color:#6a6a6a">·</span><span style="color:#6a6a6a">·</span><span style="color:#6a6a6a">·</span><span style="color:#6a6a6a">·</span><span style="color:#6a6a6a">·</span></div>
<div class="t m" style="left:8.3px;top:659.04px;color:#a6a6a6">0080</div>
<div class="t m" style="left:53.3px;top:659.04px;color:#000">9a e0 e2 51 19 6d 6d ea</div>
<div class="t m" style="left:241.3px;top:659.04px;color:#000">96 49 8b 82 99 d0 59 68</div>
<div class="t m" style="left:436px;top:659.04px;color:#000"><span style="color:#6a6a6a">·</span><span style="color:#6a6a6a">·</span><span style="color:#6a6a6a">·</span>Q<span style="color:#6a6a6a">·</span>mm<span style="color:#6a6a6a">·</span></div>
<div class="t m" style="left:503.5px;top:659.04px;color:#000"><span style="color:#6a6a6a">·</span>I<span style="color:#6a6a6a">·</span><span style="color:#6a6a6a">·</span><span style="color:#6a6a6a">·</span><span style="color:#6a6a6a">·</span>Yh</div>
<div class="t m" style="left:8.3px;top:675.68px;color:#a6a6a6">0090</div>
<div class="t m" style="left:53.3px;top:675.68px;color:#000">90 5d 74 87 17 9e 72 db</div>
<div class="t m" style="left:241.3px;top:675.68px;color:#000">f3 8e 58 8e 9e a9 11 a0</div>
<div class="t m" style="left:436px;top:675.68px;color:#000"><span style="color:#6a6a6a">·</span>]t<span style="color:#6a6a6a">·</span><span style="color:#6a6a6a">·</span><span style="color:#6a6a6a">·</span>r<span style="color:#6a6a6a">·</span></div>
<div class="t m" style="left:503.5px;top:675.68px;color:#000"><span style="color:#6a6a6a">·</span><span style="color:#6a6a6a">·</span>X<span style="color:#6a6a6a">·</span><span style="color:#6a6a6a">·</span><span style="color:#6a6a6a">·</span><span style="color:#6a6a6a">·</span><span style="color:#6a6a6a">·</span></div>
<div class="t m" style="left:8.3px;top:692.32px;color:#a6a6a6">00a0</div>
<div class="t m" style="left:53.3px;top:692.32px;color:#000">f5 d9 6f 7f a9 1d 27 62</div>
<div class="t m" style="left:241.3px;top:692.32px;color:#000">e2 69 66 41 b3 d8 bc e9</div>
<div class="t m" style="left:436px;top:692.32px;color:#000"><span style="color:#6a6a6a">·</span><span style="color:#6a6a6a">·</span>o<span style="color:#6a6a6a">·</span><span style="color:#6a6a6a">·</span><span style="color:#6a6a6a">·</span>&#x27;b</div>
<div class="t m" style="left:503.5px;top:692.32px;color:#000"><span style="color:#6a6a6a">·</span>ifA<span style="color:#6a6a6a">·</span><span style="color:#6a6a6a">·</span><span style="color:#6a6a6a">·</span><span style="color:#6a6a6a">·</span></div>
<div class="t m" style="left:8.3px;top:708.96px;color:#a6a6a6">00b0</div>
<div class="t m" style="left:53.3px;top:708.96px;color:#000">e9 c2 76 cf ba a3 ec c2</div>
<div class="t m" style="left:241.3px;top:708.96px;color:#000">5c 6f 79 fd 02 88 8a 31</div>
<div class="t m" style="left:436px;top:708.96px;color:#000"><span style="color:#6a6a6a">·</span><span style="color:#6a6a6a">·</span>v<span style="color:#6a6a6a">·</span><span style="color:#6a6a6a">·</span><span style="color:#6a6a6a">·</span><span style="color:#6a6a6a">·</span><span style="color:#6a6a6a">·</span></div>
<div class="t m" style="left:503.5px;top:708.96px;color:#000">\oy<span style="color:#6a6a6a">·</span><span style="color:#6a6a6a">·</span><span style="color:#6a6a6a">·</span><span style="color:#6a6a6a">·</span>1</div>
<div class="t m" style="left:8.3px;top:725.60px;color:#a6a6a6">00c0</div>
<div class="t m" style="left:53.3px;top:725.60px;color:#000">03 f6 61 7a 6c 84 79 4a</div>
<div class="t m" style="left:241.3px;top:725.60px;color:#000">1c 06 44 4f f4 fe ae 69</div>
<div class="t m" style="left:436px;top:725.60px;color:#000"><span style="color:#6a6a6a">·</span><span style="color:#6a6a6a">·</span>azl<span style="color:#6a6a6a">·</span>yJ</div>
<div class="t m" style="left:503.5px;top:725.60px;color:#000"><span style="color:#6a6a6a">·</span><span style="color:#6a6a6a">·</span>DO<span style="color:#6a6a6a">·</span><span style="color:#6a6a6a">·</span><span style="color:#6a6a6a">·</span>i</div>
<div class="t m" style="left:8.3px;top:742.24px;color:#a6a6a6">00d0</div>
<div class="t m" style="left:53.3px;top:742.24px;color:#000">31 2d 1b a9 24 74 59 5c</div>
<div class="t m" style="left:241.3px;top:742.24px;color:#000">ce e2 38 79 86 8b c0 59</div>
<div class="t m" style="left:436px;top:742.24px;color:#000">1-<span style="color:#6a6a6a">·</span><span style="color:#6a6a6a">·</span>$tY\</div>
<div class="t m" style="left:503.5px;top:742.24px;color:#000"><span style="color:#6a6a6a">·</span><span style="color:#6a6a6a">·</span>8y<span style="color:#6a6a6a">·</span><span style="color:#6a6a6a">·</span><span style="color:#6a6a6a">·</span>Y</div>
<div class="t m" style="left:8.3px;top:758.88px;color:#a6a6a6">00e0</div>
<div class="t m" style="left:53.3px;top:758.88px;color:#000">6f 0e ef 02 a2 c9 3e d7</div>
<div class="t m" style="left:241.3px;top:758.88px;color:#000">d6 10 23 30 b4 f8 be dd</div>
<div class="t m" style="left:436px;top:758.88px;color:#000">o<span style="color:#6a6a6a">·</span><span style="color:#6a6a6a">·</span><span style="color:#6a6a6a">·</span><span style="color:#6a6a6a">·</span><span style="color:#6a6a6a">·</span>&gt;<span style="color:#6a6a6a">·</span></div>
<div class="t m" style="left:503.5px;top:758.88px;color:#000"><span style="color:#6a6a6a">·</span><span style="color:#6a6a6a">·</span>#0<span style="color:#6a6a6a">·</span><span style="color:#6a6a6a">·</span><span style="color:#6a6a6a">·</span><span style="color:#6a6a6a">·</span></div>
<div class="t m" style="left:8.3px;top:775.52px;color:#a6a6a6">00f0</div>
<div class="t m" style="left:53.3px;top:775.52px;color:#000">d9 79 fe 4c c4 b5 e4 bc</div>
<div class="t m" style="left:241.3px;top:775.52px;color:#000">99 45 dd 41 1f 75 49 73</div>
<div class="t m" style="left:436px;top:775.52px;color:#000"><span style="color:#6a6a6a">·</span>y<span style="color:#6a6a6a">·</span>L<span style="color:#6a6a6a">·</span><span style="color:#6a6a6a">·</span><span style="color:#6a6a6a">·</span><span style="color:#6a6a6a">·</span></div>
<div class="t m" style="left:503.5px;top:775.52px;color:#000"><span style="color:#6a6a6a">·</span>E<span style="color:#6a6a6a">·</span>A<span style="color:#6a6a6a">·</span>uIs</div>
<div class="a" style="left:1582px;top:557px;width:17px;height:248px;background:#f0f0f0;border-left:1px solid #fafafa"></div>
<div class="a" style="left:1588px;top:579px;width:5px;height:24px;background:#868686"></div>
<div class="a" style="left:0;top:806px;width:1600px;height:20px;background:#f0f0f0"></div>
<div class="a" style="left:0;top:826px;width:1600px;height:2px;background:#000"></div>
<svg class="a" style="left:6px;top:807px" width="40" height="18" viewBox="0 0 40 18"><defs><radialGradient id="rg" cx="0.4" cy="0.3" r="0.75"><stop offset="0" stop-color="#f29a9a"/><stop offset="1" stop-color="#dc4c4c"/></radialGradient></defs><circle cx="8" cy="8.6" r="5.7" fill="url(#rg)" stroke="#a82a2a" stroke-width="0.8"/><rect x="23" y="3" width="9" height="10.8" fill="#f6f6f2" stroke="#d8d8d0" stroke-width="0.6"/><rect x="23" y="2.8" width="8" height="2.6" fill="#2f98de"/><path d="M26.8 10.6 L33.2 3.6" stroke="#3a3a3a" stroke-width="1.7" stroke-linecap="round"/><circle cx="26.6" cy="10.9" r="0.9" fill="#000"/></svg>
<div class="t s" style="left:54.5px;top:811px;font-size:10.7px;color:#000">Acknowledgment Number (tcp.ack), 4 bytes</div>
<div class="a" style="left:1071px;top:808px;width:1px;height:16px;background:#c4c4c4"></div>
<div class="a" style="left:1074px;top:808px;width:1px;height:16px;background:#c4c4c4"></div>
<div class="t s" style="left:1085.3px;top:811px;font-size:10.7px;color:#000">Packets: 15317 <span style="position:relative;top:-2.5px">·</span> Displayed: 15317 (100.0%)</div>
<div class="a" style="left:1512px;top:808px;width:1px;height:16px;background:#c4c4c4"></div>
<div class="a" style="left:1515px;top:808px;width:1px;height:16px;background:#c4c4c4"></div>
<div class="t s" style="left:1525.7px;top:811px;font-size:10.7px;color:#000">Profile: Default</div></body></html>
